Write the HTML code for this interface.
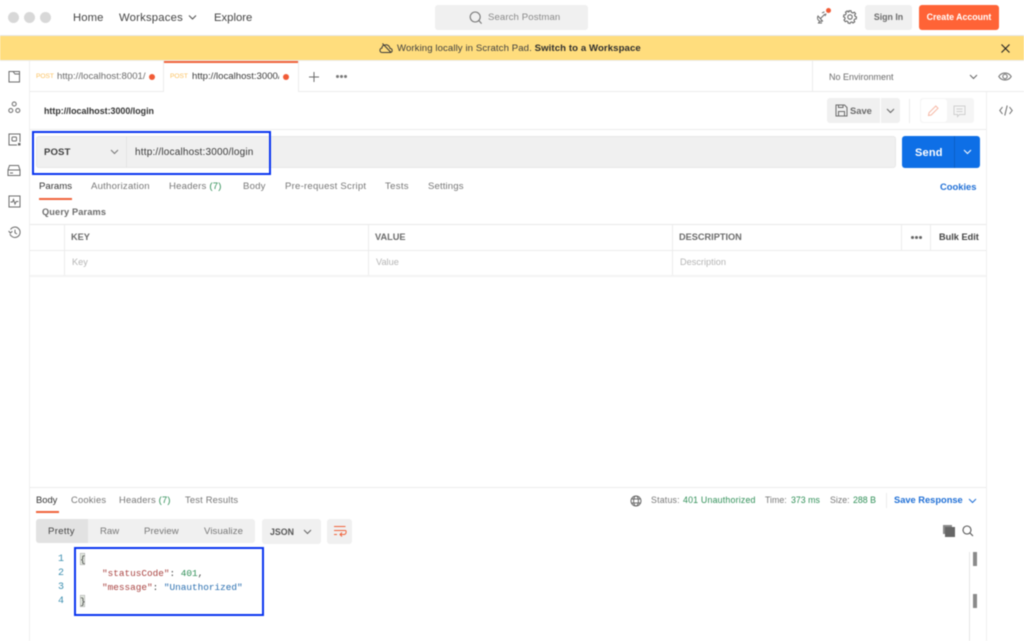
<!DOCTYPE html>
<html>
<head>
<meta charset="utf-8">
<style>
html,body{margin:0;padding:0;background:#fff;}
body{width:1024px;height:641px;overflow:hidden;position:relative;font-family:"Liberation Sans",sans-serif;}
#p{position:absolute;left:0;top:0;width:1024px;height:641px;overflow:hidden;filter:blur(0.4px);background:#fff;}
.a{position:absolute;}
.t{position:absolute;white-space:nowrap;line-height:14px;}
svg{position:absolute;overflow:visible;fill:none;}
.c{font:9.4px/14px 'Liberation Mono',monospace;}
</style>
</head>
<body>
<div id="p">
<!-- top bar -->
<div class="a" style="left:0;top:35px;width:1024px;height:1px;background:#e6e6e6"></div>
<div class="a" style="left:7.5px;top:12px;width:11px;height:11px;border-radius:50%;background:#d8d8d8"></div>
<div class="a" style="left:23.5px;top:12px;width:11px;height:11px;border-radius:50%;background:#d8d8d8"></div>
<div class="a" style="left:39.5px;top:12px;width:11px;height:11px;border-radius:50%;background:#d8d8d8"></div>
<div class="t" style="left:73px;top:11px;font-size:11.3px;color:#444;letter-spacing:.1px">Home</div>
<div class="t" style="left:119px;top:11px;font-size:11.3px;color:#444;letter-spacing:.2px">Workspaces</div>
<svg style="left:188px;top:14px" width="9" height="7" stroke="#555" stroke-width="1.1"><path d="M1 1.5 L4.5 5 L8 1.5"/></svg>
<div class="t" style="left:214px;top:11px;font-size:11.3px;color:#444">Explore</div>
<div class="a" style="left:435px;top:5px;width:153px;height:25px;border-radius:3px;background:#f0f0f0"></div>
<svg style="left:469px;top:11px" width="14" height="14" stroke="#777" stroke-width="1.1"><circle cx="6.2" cy="6" r="5"/><path d="M10 9.8 L12.6 12.6"/></svg>
<div class="t" style="left:488px;top:11px;font-size:9.6px;color:#8a8a8a;letter-spacing:.1px">Search Postman</div>
<svg style="left:816px;top:9px" width="14" height="14" stroke="#6b6b6b" stroke-width="1"><path d="M2 7 C.5 10 3 13.5 6.5 12 Z"/><path d="M4.5 9.5 L9 5 M6 4 C7 3.4 8 3 8.5 3 M9 7 C9.6 6 10 5 10 4.5 M3.5 12.5 L2.5 14 H6"/></svg>
<div class="a" style="left:826px;top:8px;width:5px;height:5px;border-radius:50%;background:#f15b36"></div>
<svg style="left:843px;top:10px" width="14" height="14" stroke="#6b6b6b" stroke-width="1.1"><circle cx="7" cy="7" r="2.2"/><path d="M6 .8 H8 L8.4 2.4 L9.9 3 L11.3 2.2 L12.6 3.7 L11.6 5 L12.1 6.3 L13.5 7 L13.2 8.9 L11.7 9.1 L11 10.4 L11.7 11.8 L10 13 L8.9 12 L7.6 12.3 L7 13.5 L5.1 13.1 L5 11.8 L3.7 11 L2.3 11.7 L1 10 L2.1 8.8 L1.8 7.4 L.5 6.8 L.9 4.9 L2.4 4.8 L3.2 3.5 L2.5 2.2 L4.2 1 L5.3 2 L6 1.8 Z"/></svg>
<div class="a" style="left:865px;top:5px;width:47px;height:25px;border-radius:3px;background:#f0f0f0"></div>
<div class="t" style="left:865px;top:10px;width:47px;text-align:center;font-size:8.8px;font-weight:bold;color:#6b6b6b">Sign In</div>
<div class="a" style="left:919px;top:5px;width:80px;height:25px;border-radius:3px;background:#ff6336"></div>
<div class="t" style="left:919px;top:10px;width:80px;text-align:center;font-size:8.8px;font-weight:bold;color:#fff">Create Account</div>

<!-- banner -->
<div class="a" style="left:0;top:36px;width:1024px;height:24px;background:#ffdd7d"></div>
<div class="a" style="left:0;top:60px;width:1024px;height:1px;background:#ececec"></div>
<svg style="left:379px;top:42px" width="14" height="12" stroke="#3a3a3a" stroke-width="1"><path d="M3.5 10.5 H11 C14 10.5 13.8 6.6 11 6.4 C10.4 3.4 7.4 1.8 5.4 3.4 C3.4 3 3 5 3 6 C.2 6.6 .2 10.5 3.5 10.5 Z"/><path d="M3.5 1.5 L12 10.5"/></svg>
<div class="t" style="left:397px;top:42px;font-size:9.6px;color:#3f3f3f;letter-spacing:.09px">Working locally in Scratch Pad. <b style="color:#2e2e2e">Switch to a Workspace</b></div>
<svg style="left:1001px;top:44px" width="9" height="9" stroke="#222" stroke-width="1.1"><path d="M.5 .5 L8.5 8.5 M8.5 .5 L.5 8.5"/></svg>

<!-- sidebar -->
<div class="a" style="left:29px;top:61px;width:1px;height:580px;background:#efefef"></div>
<svg style="left:8px;top:70px" width="13" height="13" stroke="#6b6b6b" stroke-width="1"><path d="M1 1.5 H11.5 V12 H1 Z M1 1.5 L5 1.5 L7 4 H11.5" /></svg>
<svg style="left:8px;top:101px" width="13" height="13" stroke="#6b6b6b" stroke-width="1"><circle cx="6.2" cy="3" r="2"/><circle cx="2.8" cy="9.5" r="2"/><circle cx="9.8" cy="9.5" r="2"/></svg>
<svg style="left:8px;top:133px" width="13" height="13" stroke="#6b6b6b" stroke-width="1"><path d="M9 12 H1 V1 H12 V9"/><rect x="4" y="4" width="4.5" height="4" rx="1"/><rect x="10" y="10" width="2.5" height="2.5" fill="#6b6b6b" stroke="none"/></svg>
<svg style="left:7px;top:164px" width="14" height="13" stroke="#6b6b6b" stroke-width="1"><path d="M1 6 L2.5 1.5 H11.5 L13 6 V11.5 H1 Z M1 6 H13 M3 9 H6"/></svg>
<svg style="left:8px;top:195px" width="13" height="13" stroke="#6b6b6b" stroke-width="1"><rect x="1" y="1" width="11" height="11"/><path d="M2.5 7 H4.5 L5.5 4.5 L7 9 L8.2 6.5 H10.5"/></svg>
<svg style="left:8px;top:226px" width="14" height="13" stroke="#6b6b6b" stroke-width="1"><path d="M2.5 3.5 A5.2 5.2 0 1 1 2 8"/><path d="M.6 5 L2.4 7 L4.4 5.2" /><path d="M7 3.8 V6.8 L9 8"/></svg>

<!-- tabs row -->
<div class="a" style="left:30px;top:91px;width:994px;height:1px;background:#ececec"></div>
<div class="a" style="left:163px;top:61px;width:1px;height:30px;background:#ececec"></div>
<div class="a" style="left:298px;top:61px;width:1px;height:30px;background:#ececec"></div>
<div class="a" style="left:164px;top:61px;width:134px;height:1.5px;background:#f0643c"></div>
<div class="a" style="left:164px;top:90px;width:134px;height:2px;background:#fff"></div>
<div class="t" style="left:36px;top:70px;font-size:6.6px;color:#fbc15e">POST</div>
<div class="t" style="left:57px;top:70px;font-size:9.6px;color:#6b6b6b;width:89px;overflow:hidden">http://localhost:8001/</div>
<div class="a" style="left:149px;top:74px;width:6px;height:6px;border-radius:50%;background:#f15b36"></div>
<div class="t" style="left:170px;top:70px;font-size:6.6px;color:#fbc15e">POST</div>
<div class="t" style="left:192px;top:70px;font-size:9.6px;color:#3a3a3a;width:87px;overflow:hidden">http://localhost:3000/</div>
<div class="a" style="left:283px;top:74px;width:6px;height:6px;border-radius:50%;background:#f15b36"></div>
<svg style="left:309px;top:72px" width="10" height="10" stroke="#6b6b6b" stroke-width="1"><path d="M5 0 V10 M0 5 H10"/></svg>
<div class="a" style="left:336px;top:75px;width:3px;height:3px;border-radius:50%;background:#777"></div>
<div class="a" style="left:340px;top:75px;width:3px;height:3px;border-radius:50%;background:#777"></div>
<div class="a" style="left:344px;top:75px;width:3px;height:3px;border-radius:50%;background:#777"></div>
<div class="a" style="left:812px;top:61px;width:1px;height:30px;background:#ececec"></div>
<div class="t" style="left:829px;top:70px;font-size:9px;color:#6b6b6b">No Environment</div>
<svg style="left:969px;top:74px" width="9" height="6" stroke="#666" stroke-width="1"><path d="M1 1 L4.5 4.5 L8 1"/></svg>
<svg style="left:998px;top:71px" width="14" height="11" stroke="#6b6b6b" stroke-width="1"><path d="M.8 5.5 C3.5 .8 10.5 .8 13.2 5.5 C10.5 10.2 3.5 10.2 .8 5.5 Z"/><circle cx="7" cy="5.5" r="2.2"/></svg>

<!-- right rail -->
<div class="a" style="left:986px;top:92px;width:1px;height:549px;background:#efefef"></div>
<svg style="left:999px;top:104px" width="14" height="13" stroke="#6b6b6b" stroke-width="1"><path d="M3.5 3 L.8 6.5 L3.5 10 M10.5 3 L13.2 6.5 L10.5 10 M8.2 1.5 L5.8 11.5"/></svg>

<!-- request title -->
<div class="t" style="left:44px;top:104px;font-size:8.9px;font-weight:bold;color:#333">http://localhost:3000/login</div>
<div class="a" style="left:827px;top:98px;width:53px;height:25px;border-radius:3px 0 0 3px;background:#f0f0f0"></div>
<div class="a" style="left:881px;top:98px;width:19px;height:25px;border-radius:0 3px 3px 0;background:#f0f0f0"></div>
<svg style="left:835px;top:104px" width="13" height="13" stroke="#6b6b6b" stroke-width="1"><path d="M1 1 H9.5 L12 3.5 V12 H1 Z M3.5 12 V7.5 H9.5 V12 M3.5 1 V3.5 H8 V1"/></svg>
<div class="t" style="left:850px;top:104px;font-size:9.4px;font-weight:bold;color:#6b6b6b">Save</div>
<svg style="left:886px;top:108px" width="9" height="6" stroke="#666" stroke-width="1"><path d="M1 1 L4.5 4.5 L8 1"/></svg>
<div class="a" style="left:909px;top:99px;width:1px;height:24px;background:#ececec"></div>
<div class="a" style="left:920px;top:98px;width:54px;height:25px;border-radius:3px;background:#f5f5f5"></div>
<div class="a" style="left:921px;top:99px;width:26px;height:23px;border-radius:3px;background:#fff"></div>
<svg style="left:927px;top:104px" width="13" height="13" stroke="#f7b9a6" stroke-width="1"><path d="M1.5 11.5 L2 8.8 L8.8 2 L11 4.2 L4.2 11 Z"/></svg>
<svg style="left:953px;top:105px" width="13" height="13" stroke="#cfcfcf" stroke-width="1"><path d="M1 1 H12 V9.5 H6.5 L4.5 11.5 V9.5 H1 Z M3.5 4 H9.5 M3.5 6.5 H9.5"/></svg>
<div class="a" style="left:30px;top:129px;width:956px;height:1px;background:#ececec"></div>

<!-- url bar -->
<div class="a" style="left:36px;top:136px;width:860px;height:32px;border-radius:3px;background:#f0f0f0;box-shadow:inset 0 0 0 1px #e8e8e8"></div>
<div class="a" style="left:126px;top:136px;width:1px;height:32px;background:#e4e4e4"></div>
<div class="t" style="left:44px;top:146px;font-size:9.6px;font-weight:bold;color:#3f3f3f;letter-spacing:.1px">POST</div>
<svg style="left:110px;top:149px" width="9" height="6" stroke="#777" stroke-width="1"><path d="M1 1 L4.5 4.5 L8 1"/></svg>
<div class="t" style="left:135px;top:146px;font-size:10px;color:#3a3a3a;letter-spacing:.19px">http://localhost:3000/login</div>
<div class="a" style="left:32px;top:131px;width:235px;height:40px;border:2px solid #0a35f0"></div>
<div class="a" style="left:902px;top:136px;width:78px;height:32px;border-radius:3px;background:#0e6fe6"></div>
<div class="a" style="left:954px;top:136px;width:1px;height:32px;background:#0b5fc7"></div>
<div class="t" style="left:915px;top:146px;font-size:11px;font-weight:bold;color:#fff;letter-spacing:.2px">Send</div>
<svg style="left:963px;top:149px" width="9" height="6" stroke="#fff" stroke-width="1"><path d="M1 1 L4.5 4.5 L8 1"/></svg>

<!-- request tabs -->
<div class="t" style="left:39px;top:180px;font-size:9.6px;color:#333">Params</div>
<div class="a" style="left:39px;top:198px;width:33px;height:1.5px;background:#f0643c"></div>
<div class="t" style="left:91px;top:180px;font-size:9.6px;color:#777;letter-spacing:.22px">Authorization</div>
<div class="t" style="left:169px;top:180px;font-size:9.6px;color:#777;letter-spacing:.18px">Headers <span style="color:#2f8f57">(7)</span></div>
<div class="t" style="left:243px;top:180px;font-size:9.6px;color:#777;letter-spacing:.2px">Body</div>
<div class="t" style="left:285px;top:180px;font-size:9.6px;color:#777;letter-spacing:.22px">Pre-request Script</div>
<div class="t" style="left:385px;top:180px;font-size:9.6px;color:#777;letter-spacing:.3px">Tests</div>
<div class="t" style="left:428px;top:180px;font-size:9.6px;color:#777;letter-spacing:.12px">Settings</div>
<div class="t" style="left:940px;top:180px;font-size:9.4px;font-weight:bold;color:#1f6fd6">Cookies</div>
<div class="t" style="left:42px;top:205px;font-size:9.2px;font-weight:bold;color:#6b6b6b;letter-spacing:.15px">Query Params</div>

<!-- table -->
<div class="a" style="left:30px;top:224px;width:956px;height:1px;background:#e8e8e8"></div>
<div class="a" style="left:30px;top:250px;width:956px;height:1px;background:#ececec"></div>
<div class="a" style="left:30px;top:275px;width:956px;height:2px;background:#f3f3f3"></div>
<div class="a" style="left:64px;top:224px;width:1px;height:51px;background:#ececec"></div>
<div class="a" style="left:368px;top:224px;width:1px;height:51px;background:#ececec"></div>
<div class="a" style="left:672px;top:224px;width:1px;height:51px;background:#ececec"></div>
<div class="a" style="left:901px;top:224px;width:1px;height:26px;background:#ececec"></div>
<div class="a" style="left:930px;top:224px;width:1px;height:26px;background:#ececec"></div>
<div class="t" style="left:71px;top:230px;font-size:9.2px;font-weight:bold;color:#6b6b6b">KEY</div>
<div class="t" style="left:375px;top:230px;font-size:9.2px;font-weight:bold;color:#6b6b6b">VALUE</div>
<div class="t" style="left:679px;top:230px;font-size:9.2px;font-weight:bold;color:#6b6b6b">DESCRIPTION</div>
<div class="a" style="left:911px;top:236px;width:3px;height:3px;border-radius:50%;background:#666"></div>
<div class="a" style="left:915px;top:236px;width:3px;height:3px;border-radius:50%;background:#666"></div>
<div class="a" style="left:919px;top:236px;width:3px;height:3px;border-radius:50%;background:#666"></div>
<div class="t" style="left:939px;top:230px;font-size:9.2px;font-weight:bold;color:#444">Bulk Edit</div>
<div class="t" style="left:72px;top:255px;font-size:9.2px;color:#b5b5b5">Key</div>
<div class="t" style="left:376px;top:255px;font-size:9.2px;color:#b5b5b5">Value</div>
<div class="t" style="left:680px;top:255px;font-size:9.2px;color:#b5b5b5">Description</div>

<!-- response -->
<div class="a" style="left:30px;top:487px;width:956px;height:1px;background:#ececec"></div>
<div class="t" style="left:36px;top:493px;font-size:9.4px;color:#333">Body</div>
<div class="a" style="left:36px;top:511px;width:23px;height:1.5px;background:#f0643c"></div>
<div class="t" style="left:71px;top:493px;font-size:9.4px;color:#777;letter-spacing:.2px">Cookies</div>
<div class="t" style="left:119px;top:493px;font-size:9.4px;color:#777;letter-spacing:.2px">Headers <span style="color:#2f8f57">(7)</span></div>
<div class="t" style="left:185px;top:493px;font-size:9.4px;color:#777;letter-spacing:.18px">Test Results</div>
<svg style="left:630px;top:495px" width="12" height="12" stroke="#6b6b6b" stroke-width="1"><circle cx="6" cy="6" r="5"/><ellipse cx="6" cy="6" rx="2.4" ry="5"/><path d="M1 4 H11 M1 8 H11"/></svg>
<div class="t" style="left:651px;top:493px;font-size:8.8px;color:#777;letter-spacing:.2px">Status:</div>
<div class="t" style="left:683px;top:493px;font-size:8.8px;color:#2f8f57;letter-spacing:.2px">401 Unauthorized</div>
<div class="t" style="left:765px;top:493px;font-size:8.8px;color:#777">Time:</div>
<div class="t" style="left:791px;top:493px;font-size:8.8px;color:#2f8f57">373 ms</div>
<div class="t" style="left:830px;top:493px;font-size:8.8px;color:#777">Size:</div>
<div class="t" style="left:853px;top:493px;font-size:8.8px;color:#2f8f57">288 B</div>
<div class="a" style="left:886px;top:493px;width:1px;height:15px;background:#ececec"></div>
<div class="t" style="left:894px;top:493px;font-size:9.3px;font-weight:bold;color:#1f6fd6">Save Response</div>
<svg style="left:968px;top:498px" width="9" height="6" stroke="#1f6fd6" stroke-width="1"><path d="M1 1 L4.5 4.5 L8 1"/></svg>

<div class="a" style="left:36px;top:519px;width:219px;height:24px;border-radius:3px;background:#f0f0f0"></div>
<div class="a" style="left:36px;top:519px;width:52px;height:24px;border-radius:3px 0 0 3px;background:#e2e2e2"></div>
<div class="t" style="left:48px;top:525px;font-size:9.6px;color:#444;letter-spacing:.3px">Pretty</div>
<div class="t" style="left:100px;top:525px;font-size:9.6px;color:#777">Raw</div>
<div class="t" style="left:144px;top:525px;font-size:9.6px;color:#777;letter-spacing:.1px">Preview</div>
<div class="t" style="left:204px;top:525px;font-size:9.6px;color:#777;letter-spacing:.1px">Visualize</div>
<div class="a" style="left:262px;top:519px;width:59px;height:25px;border-radius:3px;background:#f0f0f0"></div>
<div class="t" style="left:270px;top:525px;font-size:8.8px;font-weight:bold;color:#555">JSON</div>
<svg style="left:303px;top:529px" width="9" height="6" stroke="#666" stroke-width="1"><path d="M1 1 L4.5 4.5 L8 1"/></svg>
<div class="a" style="left:327px;top:519px;width:25px;height:25px;border-radius:3px;background:#f0f0f0"></div>
<svg style="left:333px;top:525px" width="14" height="13" stroke="#f0643c" stroke-width="1"><path d="M1 1.5 H12.5 M1 5.5 H12.5 C13.5 5.5 13.5 9.5 11 9.5 H7 M9 7.5 L7 9.5 L9 11.5 M1 9.5 H4"/></svg>
<svg style="left:943px;top:525px" width="13" height="13"><rect x="0" y="0" width="9" height="9" fill="#8a8a8a"/><rect x="2" y="2" width="10" height="10" fill="#666"/></svg>
<svg style="left:962px;top:525px" width="12" height="12" stroke="#555" stroke-width="1.1"><circle cx="5" cy="5" r="4"/><path d="M8 8 L11 11"/></svg>

<!-- code -->
<div class="t c" style="left:40px;top:553px;width:24px;text-align:right;font-size:10px;color:#3d8fb0">1</div>
<div class="t c" style="left:40px;top:567px;width:24px;text-align:right;font-size:10px;color:#3d8fb0">2</div>
<div class="t c" style="left:40px;top:581px;width:24px;text-align:right;font-size:10px;color:#3d8fb0">3</div>
<div class="t c" style="left:40px;top:595px;width:24px;text-align:right;font-size:10px;color:#3d8fb0">4</div>
<div class="a" style="left:80px;top:553px;width:4.5px;height:12px;background:#dfe5dc;box-shadow:inset 0 0 0 .5px #aaa"></div>
<div class="a" style="left:80px;top:595px;width:4.5px;height:12px;background:#dfe5dc;box-shadow:inset 0 0 0 .5px #aaa"></div>
<div class="t c" style="left:80px;top:553px;color:#444">{</div>
<div class="t c" style="left:80px;top:595px;color:#444">}</div>
<div class="t c" style="left:102px;top:567px;color:#a94442"><span>"statusCode"</span><span style="color:#444">: </span><span style="color:#2f8f57">401</span><span style="color:#444">,</span></div>
<div class="t c" style="left:102px;top:581px;color:#a94442"><span>"message"</span><span style="color:#444">: </span><span style="color:#2a6fb0">"Unauthorized"</span></div>
<div class="a" style="left:74px;top:547px;width:186px;height:65px;border:2px solid #0a35f0"></div>
<div class="a" style="left:969px;top:552px;width:1px;height:89px;background:#e6e6e6"></div>
<div class="a" style="left:973px;top:552px;width:4px;height:14px;background:#8a8a8a"></div>
<div class="a" style="left:973px;top:594px;width:4px;height:14px;background:#8a8a8a"></div>
</div>
</body>
</html>
